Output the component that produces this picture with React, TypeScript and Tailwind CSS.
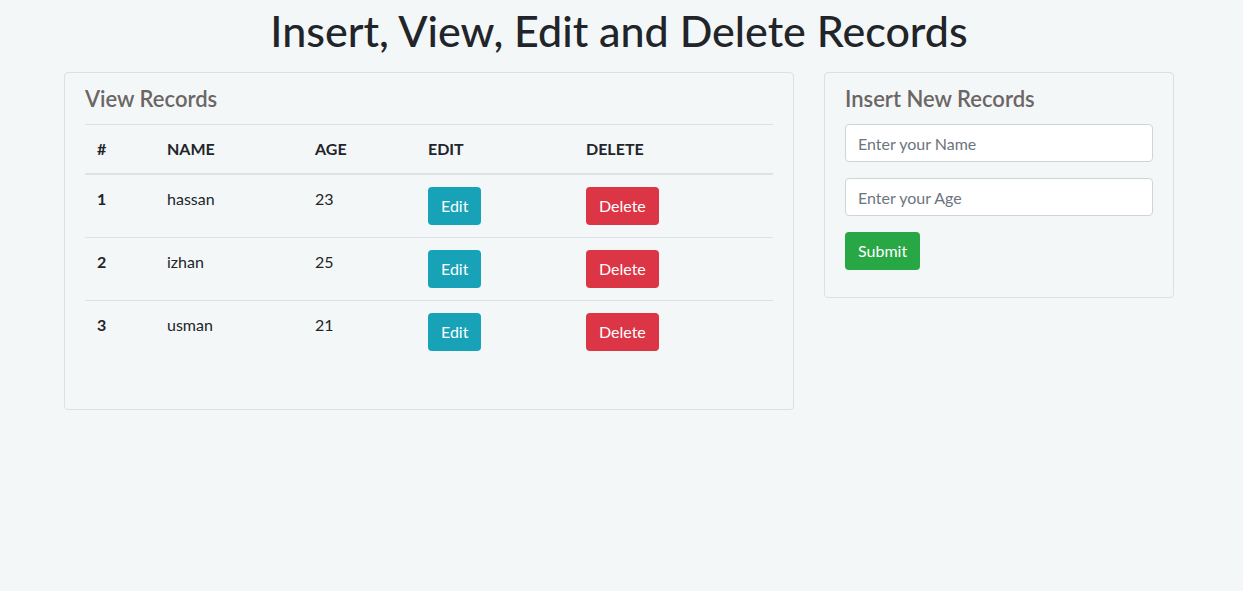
import React from "react";

type Row = { id: number; name: string; age: number };

const rows: Row[] = [
  { id: 1, name: "hassan", age: 23 },
  { id: 2, name: "izhan", age: 25 },
  { id: 3, name: "usman", age: 21 },
];

function RecordsTable() {
  return (
    <table className="w-full border-collapse text-[16px] text-[#212529]">
      <thead>
        <tr className="border-t border-[#dee2e6] border-b-2">
          <th className="w-[70px] px-3 py-3 text-left font-bold">#</th>
          <th className="w-[148px] px-3 py-3 text-left font-bold">NAME</th>
          <th className="w-[113px] px-3 py-3 text-left font-bold">AGE</th>
          <th className="w-[158px] px-3 py-3 text-left font-bold">EDIT</th>
          <th className="px-3 py-3 text-left font-bold">DELETE</th>
        </tr>
      </thead>
      <tbody>
        {rows.map((r, i) => (
          <tr key={r.id} className={i > 0 ? "border-t border-[#dee2e6]" : ""}>
            <td className="px-3 py-3 align-top font-bold leading-6">{r.id}</td>
            <td className="px-3 py-3 align-top leading-6">{r.name}</td>
            <td className="px-3 py-3 align-top leading-6">{r.age}</td>
            <td className="px-3 py-3 align-top">
              <button className="h-[38px] rounded-[4px] bg-[#17a2b8] px-[13px] text-white">Edit</button>
            </td>
            <td className="px-3 py-3 align-top">
              <button className="h-[38px] rounded-[4px] bg-[#dc3545] px-[13px] text-white">Delete</button>
            </td>
          </tr>
        ))}
      </tbody>
    </table>
  );
}

export default function App() {
  return (
    <div className="min-h-screen bg-[#f4f7f8] font-['Lato','Liberation_Sans',sans-serif] text-[#212529]">
      <div className="ml-[64px] w-[1110px]">
        <h1 className="pt-[6px] pb-[8px] text-center text-[43px] leading-[50px] font-medium">
          Insert, View, Edit and Delete Records
        </h1>
        <div className="mt-[8px] flex items-start gap-[30px]">
          <section className="w-[730px] rounded-[4px] border border-[#dcdfe3] px-5 pt-[12px] pb-[46px]">
            <h4 className="mb-[11px] text-[22px] leading-[28px] font-semibold text-[#6b6665]">View Records</h4>
            <RecordsTable />
          </section>
          <section className="w-[350px] rounded-[4px] border border-[#dcdfe3] px-5 pt-[12px] pb-[27px]">
            <h4 className="mb-[11px] text-[22px] leading-[28px] font-semibold text-[#6b6665]">Insert New Records</h4>
            <form className="flex flex-col items-start">
              <input
                placeholder="Enter your Name"
                className="mb-[16px] h-[38px] w-full rounded-[4px] border border-[#ced4da] bg-white px-3 text-[16px] placeholder:text-[#6c757d]"
              />
              <input
                placeholder="Enter your Age"
                className="mb-[16px] h-[38px] w-full rounded-[4px] border border-[#ced4da] bg-white px-3 text-[16px] placeholder:text-[#6c757d]"
              />
              <button type="button" className="h-[38px] rounded-[4px] bg-[#28a745] px-[13px] text-[16px] text-white">
                Submit
              </button>
            </form>
          </section>
        </div>
      </div>
    </div>
  );
}
